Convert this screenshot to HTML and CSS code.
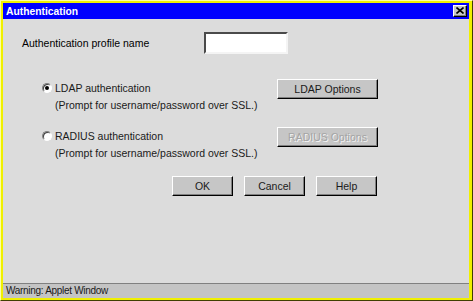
FILE: index.html
```html
<!DOCTYPE html>
<html>
<head>
<meta charset="utf-8">
<link rel="stylesheet" href="styles.css">
</head>
<body>
<div class="window">
  <div class="frame">
    <div class="titlebar">
      <span class="title">Authentication</span>
      <span class="close">
        <svg width="8" height="7" viewBox="0 0 8 7"><path d="M0.5 0.5 L7.5 6.5 M7.5 0.5 L0.5 6.5" stroke="#000" stroke-width="1.6" fill="none"/></svg>
      </span>
    </div>
    <div class="content">
      <div class="row-name">
        <span class="name-label">Authentication profile name</span>
        <span class="field"></span>
      </div>
      <div class="option">
        <div class="opt-text">
          <div class="line"><span class="radio checked"></span>LDAP authentication</div>
          <div class="line sub">(Prompt for username/password over SSL.)</div>
        </div>
        <span class="btn btn-wide">LDAP Options</span>
      </div>
      <div class="option option2">
        <div class="opt-text">
          <div class="line"><span class="radio"></span>RADIUS authentication</div>
          <div class="line sub">(Prompt for username/password over SSL.)</div>
        </div>
        <span class="btn btn-wide disabled">RADIUS Options</span>
      </div>
      <div class="actions">
        <span class="btn">OK</span>
        <span class="btn">Cancel</span>
        <span class="btn">Help</span>
      </div>
    </div>
    <div class="status">Warning: Applet Window</div>
  </div>
</div>
</body>
</html>
```
FILE: styles.css
```css
html, body {
  margin: 0;
  padding: 0;
  background: #dcdcdc;
}
.window {
  width: 473px;
  height: 301px;
  box-sizing: border-box;
  border: 1px solid;
  border-color: #ffffa0 #404000 #404000 #ffffa0;
  font-family: "Liberation Sans", Arial, sans-serif;
  font-size: 10.5px;
  color: #000;
}
.frame {
  height: 100%;
  box-sizing: border-box;
  border: 2px solid #f0f000;
  border-right-width: 3px;
  border-bottom-width: 2px;
  display: flex;
  flex-direction: column;
  background: #dcdcdc;
}
.titlebar {
  height: 16px;
  background: #0000ff;
  display: flex;
  align-items: center;
  justify-content: space-between;
  flex: none;
}
.title {
  color: #fff;
  font-weight: bold;
  padding-left: 3px;
  font-size: 10.3px;
}
.close {
  width: 14px;
  height: 12px;
  box-sizing: border-box;
  margin-right: 2px;
  background: #c8c8c8;
  border: 1px solid;
  border-color: #fff #000 #000 #fff;
  box-shadow: inset -1px -1px #808080;
  display: flex;
  align-items: center;
  justify-content: center;
}
.close svg { display: block; margin-top: -1px; }
.content {
  flex: 1;
  display: flex;
  flex-direction: column;
}
.row-name {
  display: flex;
  align-items: center;
  margin-top: 13px;
  padding-left: 19px;
}
.name-label {
  width: 182px;
}
.field {
  width: 84px;
  height: 22px;
  box-sizing: border-box;
  background: #fff;
  border: 2px solid;
  border-color: #4a4a4a #f4f4f4 #f4f4f4 #4a4a4a;
}
.option {
  display: flex;
  align-items: flex-start;
  margin-top: 25px;
  padding-left: 38px;
}
.option2 { margin-top: 14px; }
.opt-text {
  width: 236px;
  padding-top: 1px;
}
.line {
  height: 16px;
  line-height: 16px;
  display: flex;
  align-items: center;
  color: #1a1a1a;
}
.line.sub { padding-left: 14px; height: 17px; }
.radio {
  width: 10px;
  height: 10px;
  box-sizing: border-box;
  border-radius: 50%;
  border: 1px solid;
  border-color: #808080 #ffffff #ffffff #808080;
  box-shadow: inset 1px 1px #404040;
  background: #fff;
  margin-left: 1px;
  margin-right: 3px;
  position: relative;
}
.radio.checked::after {
  content: "";
  position: absolute;
  left: 2px;
  top: 2px;
  width: 4px;
  height: 4px;
  border-radius: 50%;
  background: #000;
}
.btn {
  height: 20px;
  width: 61px;
  box-sizing: border-box;
  background: #c6c6c6;
  border: 1px solid;
  border-color: #fff #000 #000 #fff;
  box-shadow: inset -1px -1px #808080;
  display: flex;
  align-items: center;
  justify-content: center;
  color: #1a1a1a;
}
.btn-wide { width: 101px; }
.btn.disabled {
  color: #a4a4a4;
  text-shadow: 1px 1px #f4f4f4;
}
.actions {
  display: flex;
  gap: 11px;
  margin-top: 15px;
  padding-left: 169px;
}
.status {
  flex: none;
  height: 14px;
  line-height: 13px;
  font-size: 10px;
  letter-spacing: -0.3px;
  background: #c4c4c4;
  border-top: 1px solid #808080;
  padding-left: 3px;
  color: #1a1a1a;
}
```
